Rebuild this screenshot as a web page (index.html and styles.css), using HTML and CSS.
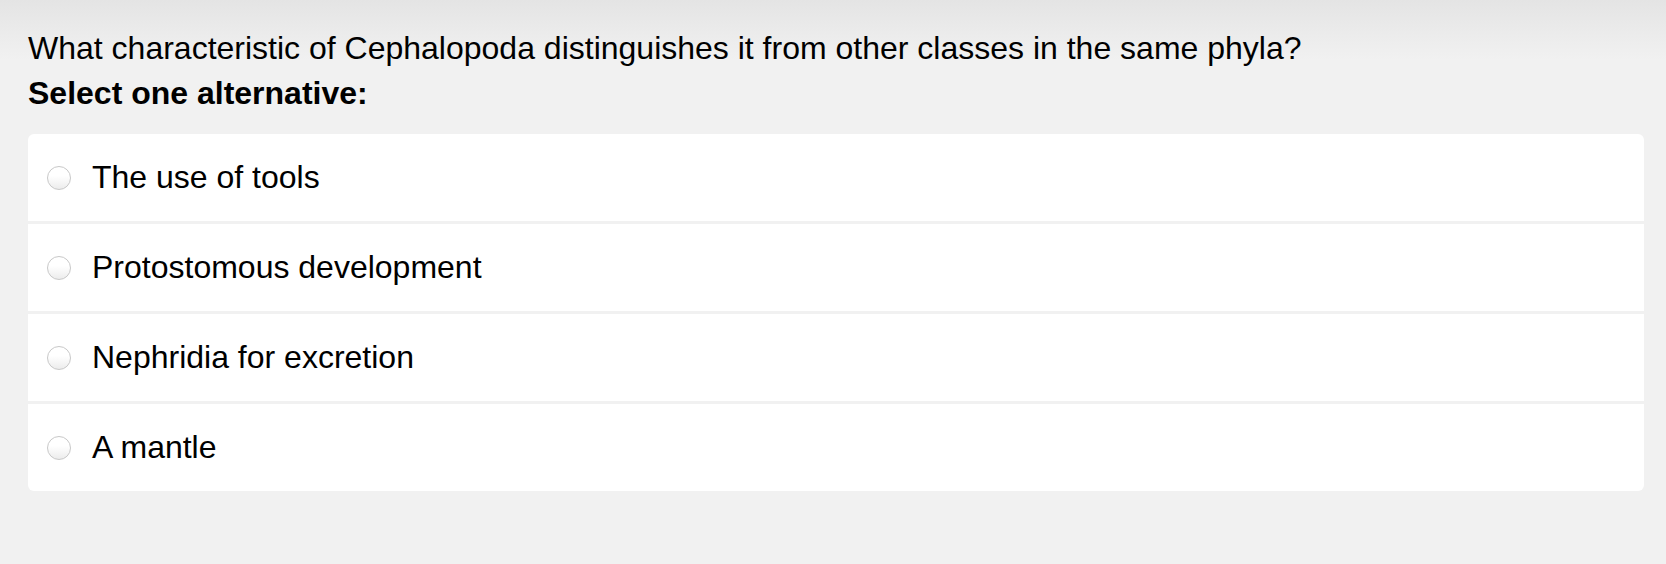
FILE: index.html
```html
<!DOCTYPE html>
<html>
<head>
    <title>Question</title>
    <meta charset="utf-8">
    <link rel="stylesheet" href="styles.css">
</head>
<body>
    <div class="page">
        <div class="question">What characteristic of Cephalopoda distinguishes it from other classes in the same phyla?</div>
        <div class="prompt">Select one alternative:</div>
        <div class="options">
            <label class="option"><input type="radio" name="answer"><span class="radio"></span>The use of tools</label>
            <label class="option"><input type="radio" name="answer"><span class="radio"></span>Protostomous development</label>
            <label class="option"><input type="radio" name="answer"><span class="radio"></span>Nephridia for excretion</label>
            <label class="option"><input type="radio" name="answer"><span class="radio"></span>A mantle</label>
        </div>
    </div>
</body>
</html>
```
FILE: styles.css
```css
html, body {
    margin: 0;
    height: 100%;
}
body {
    font-family: "Liberation Sans", Arial, sans-serif;
    color: #000;
    background: linear-gradient(to bottom, #e4e4e4 0, #f1f1f1 60px, #f1f1f1 100%);
}
.page {
    padding: 26px 22px 0 28px;
}
.question {
    font-size: 32px;
    line-height: 45px;
}
.prompt {
    font-size: 32px;
    line-height: 45px;
    font-weight: bold;
}
.options {
    margin-top: 18px;
    display: flex;
    flex-direction: column;
    gap: 3px;
    border-radius: 6px;
    overflow: hidden;
}
.option {
    height: 87px;
    background-color: #fff;
    display: flex;
    align-items: center;
    padding-left: 19px;
    font-size: 32px;
    cursor: pointer;
}
.option input {
    display: none;
}
.radio {
    width: 24px;
    height: 24px;
    box-sizing: border-box;
    border-radius: 50%;
    border: 1px solid #c8c8c8;
    background: linear-gradient(to bottom, #ffffff 40%, #ececec 100%);
    margin-right: 21px;
    flex-shrink: 0;
}
```
